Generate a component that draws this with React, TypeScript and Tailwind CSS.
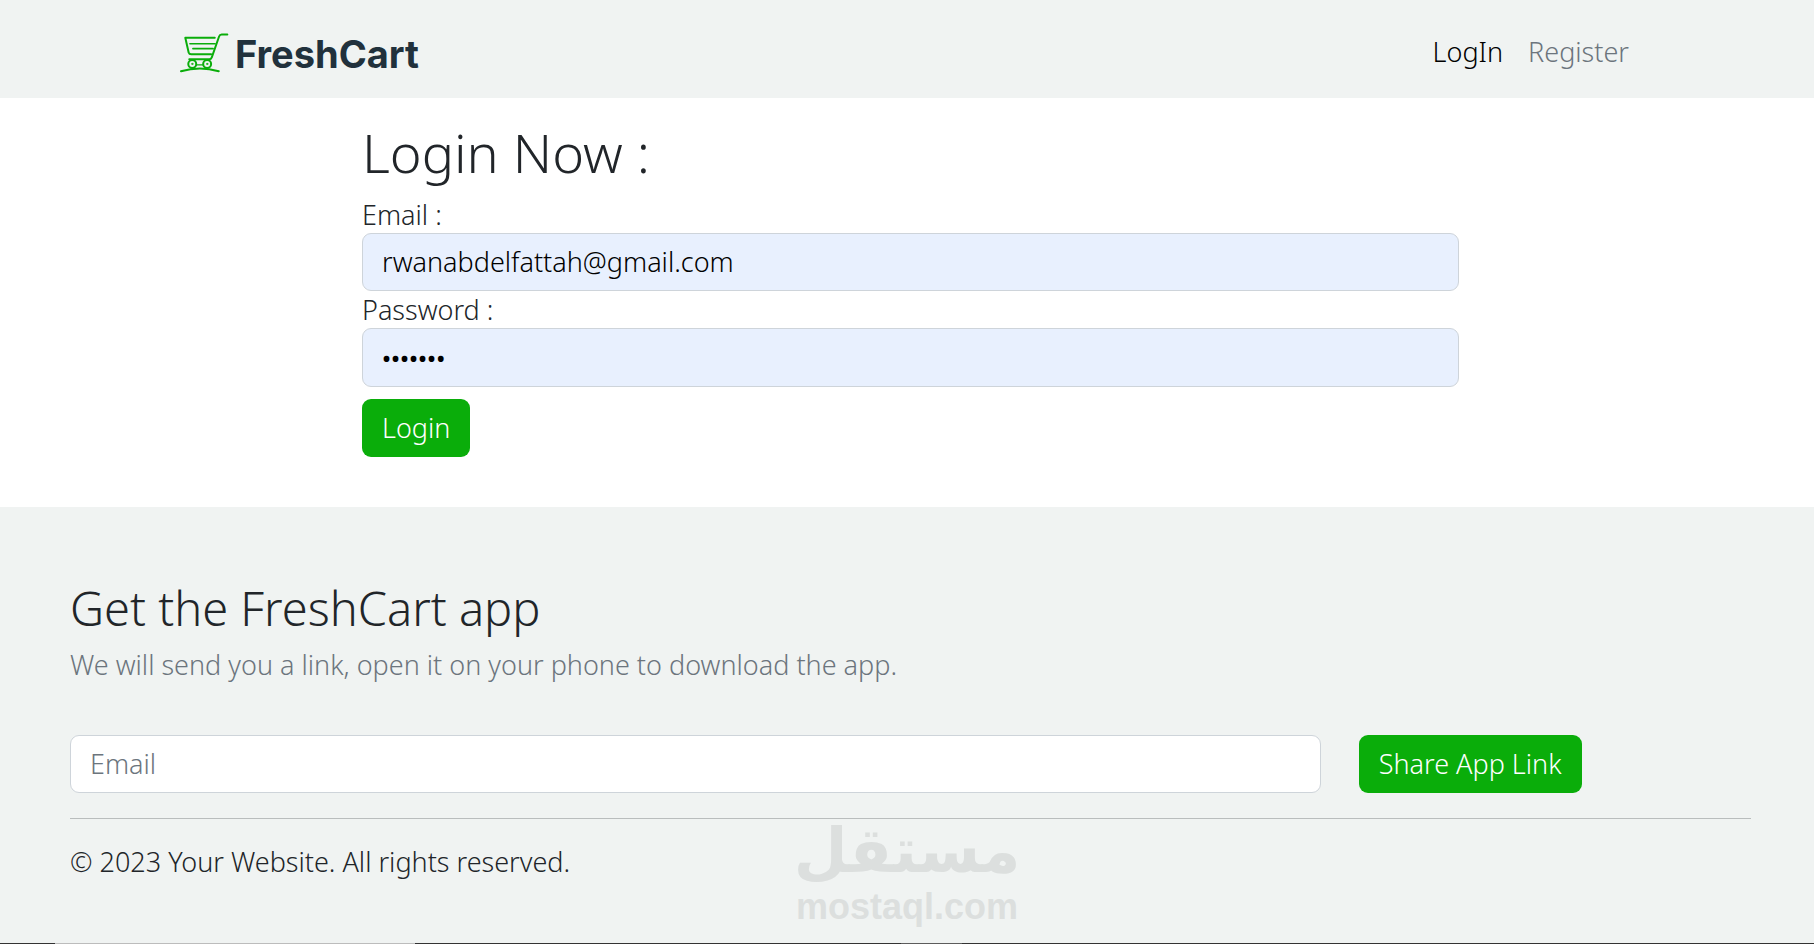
import type { ComponentProps } from "react";
import { clsx } from "clsx";

function CartIcon({ className }: { className?: string }) {
  return (
    <svg
      viewBox="58 36 148 123"
      fill="none"
      stroke="#0aad0a"
      strokeWidth="6"
      strokeLinecap="round"
      strokeLinejoin="round"
      className={className}
      aria-hidden="true"
    >
      <path d="M201 43H184q-6 0-8 6L154 112q-2 6-8 6H86" />
      <path d="M163 53H74l10 44q2 6 8 6h60" />
      <path d="M88 71h76M97 86h61" strokeWidth="5" />
      <circle cx="95" cy="132" r="12" />
      <circle cx="140" cy="132" r="12" />
      <circle cx="95" cy="132" r="2" strokeWidth="3" />
      <circle cx="140" cy="132" r="2" strokeWidth="3" />
      <path d="M108 135h19" strokeWidth="4" />
      <path d="M61 154q57-16 114 0" />
    </svg>
  );
}

function Input({ className, ...props }: ComponentProps<"input">) {
  return (
    <input
      className={clsx(
        "w-full rounded-[9px] border border-[#ced4da] px-[19px] pb-0.5 placeholder:text-[#6c757d]",
        className,
      )}
      {...props}
    />
  );
}

function Button({ className, ...props }: ComponentProps<"button">) {
  return (
    <button
      className={clsx(
        "h-[58px] rounded-[9px] bg-[#0aad0a] px-5 pb-0.5 text-white",
        className,
      )}
      {...props}
    />
  );
}

function Navbar() {
  return (
    <nav className="flex h-[98px] items-center justify-between bg-[#f0f3f2] pt-1 pr-[185px] pl-[180px]">
      <a href="#" className="flex items-center gap-[6px] pt-0.5">
        <CartIcon className="h-[41px] w-[49px]" />
        <span className="pt-1 font-['Inter',sans-serif] text-[38px] leading-[56px] font-bold text-[#21313c]">
          FreshCart
        </span>
      </a>
      <div className="flex gap-[25px]">
        <a href="#login" className="text-[#000000]">
          LogIn
        </a>
        <a href="#register" className="text-[#6c757d]">
          Register
        </a>
      </div>
    </nav>
  );
}

function LoginForm() {
  return (
    <main className="pt-6 pr-[355px] pb-[50px] pl-[362px]">
      <h1 className="mb-[14px] text-[54px] leading-[60px]">Login Now :</h1>
      <form onSubmit={(e) => e.preventDefault()}>
        <label htmlFor="email" className="block">
          Email :
        </label>
        <Input
          id="email"
          type="email"
          defaultValue="rwanabdelfattah@gmail.com"
          className="h-[58px] bg-[#e8f0fe] text-black"
        />
        <label htmlFor="password" className="block">
          Password :
        </label>
        <Input
          id="password"
          type="password"
          defaultValue="1234567"
          className="h-[59px] bg-[#e8f0fe] pt-1 text-[24px] font-medium text-black"
        />
        <Button type="submit" className="mt-3">
          Login
        </Button>
      </form>
    </main>
  );
}

function Footer() {
  return (
    <footer className="relative flex-1 bg-[#f0f3f2] pt-[73px] pr-[63px] pl-[70px]">
      <h2 className="mb-[10px] text-[47px] leading-[56px]">
        Get the FreshCart app
      </h2>
      <p className="text-[#6c757d]">
        We will send you a link, open it on your phone to download the app.
      </p>
      <form
        className="mt-[52px] flex gap-7"
        onSubmit={(e) => e.preventDefault()}
      >
        <div className="w-3/4 pr-[10px]">
          <Input
            type="email"
            placeholder="Email"
            aria-label="Email"
            className="h-[58px] bg-white"
          />
        </div>
        <Button type="submit">Share App Link</Button>
      </form>
      <hr className="mt-[25px] mb-6 border-[#b9bdbd]" />
      <p>© 2023 Your Website. All rights reserved.</p>
      <div className="pointer-events-none absolute inset-x-0 bottom-4 flex flex-col items-center font-bold text-[#dcdfde]">
        <span
          lang="ar"
          dir="rtl"
          className="font-['DejaVu_Sans',sans-serif] text-[62px] leading-[72px]"
        >
          مستقل
        </span>
        <span className="font-['Liberation_Sans',sans-serif] text-[36px] leading-[40px]">
          mostaql.com
        </span>
      </div>
    </footer>
  );
}

export default function App() {
  return (
    <div className="flex min-h-screen flex-col bg-white font-['Noto_Sans',sans-serif] text-[27px] leading-[37px] font-light text-[#212529]">
      <Navbar />
      <LoginForm />
      <Footer />
      <div className="flex h-px bg-[#333333]">
        <div className="ml-[55px] w-[360px] bg-[#bcbcbc]" />
        <div className="ml-[486px] w-[61px] bg-[#5c5c5c]" />
      </div>
    </div>
  );
}
